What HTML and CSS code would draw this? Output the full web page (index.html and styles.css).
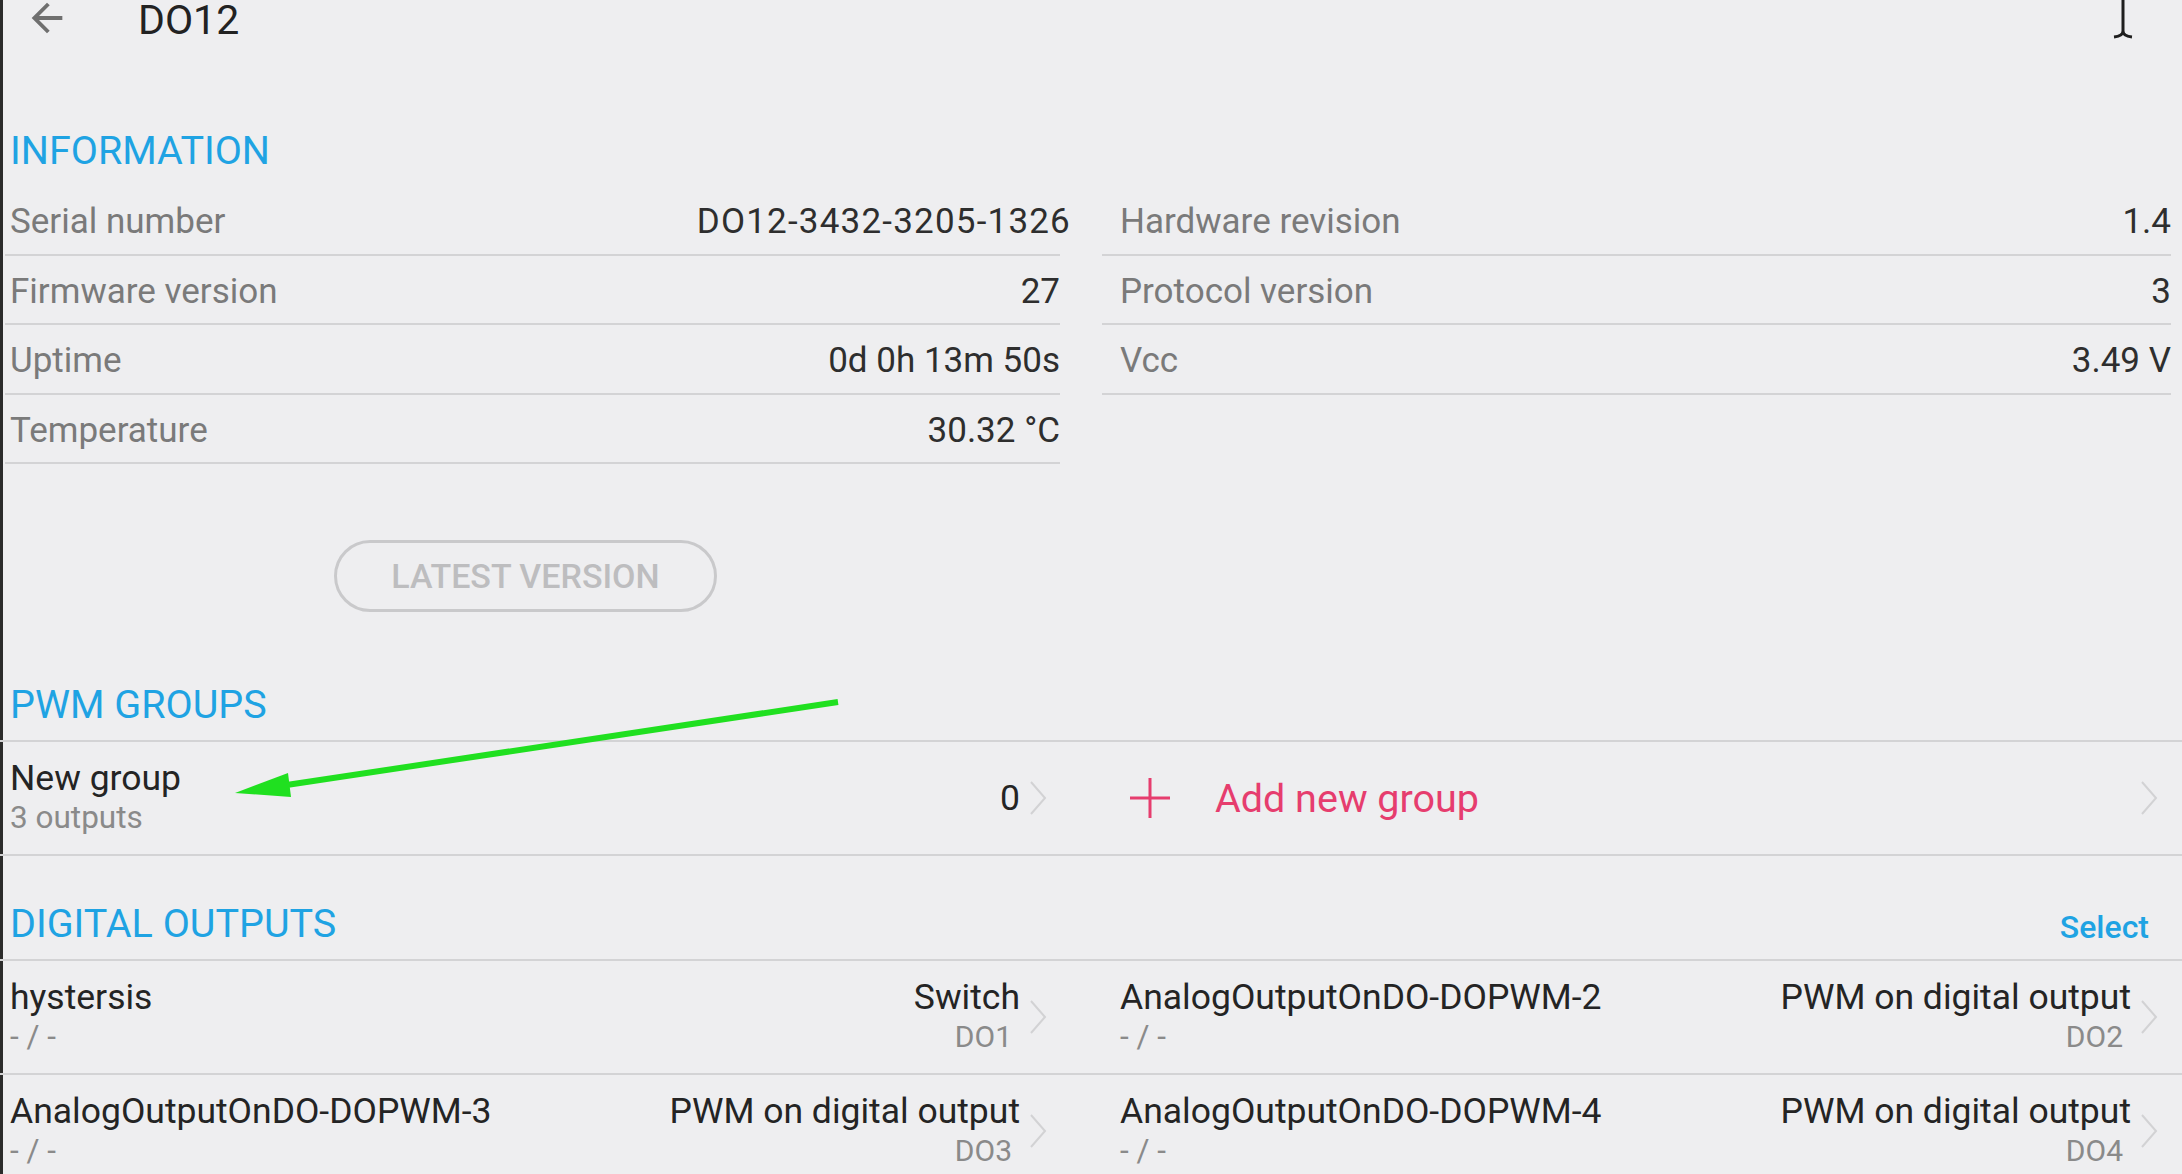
FILE: index.html
```html
<!DOCTYPE html>
<html lang="en">
<head>
    <meta charset="UTF-8">
    <title>DO12</title>
    <link rel="stylesheet" href="styles.css">
</head>
<body>
    <!-- Top bar -->
    <div class="topbar">
        <svg class="back-icon" viewBox="0 0 24 24"><path d="M20 11H7.83l5.59-5.59L12 4l-8 8 8 8 1.41-1.41L7.83 13H20v-2z"/></svg>
        <div class="title">DO12</div>
    </div>

    <!-- Information -->
    <div class="section-head">INFORMATION</div>
    <div class="info-grid">
        <div class="info-col">
            <div class="info-row"><span class="label">Serial number</span><span class="value value-wide">DO12-3432-3205-1326</span></div>
            <div class="info-row"><span class="label">Firmware version</span><span class="value">27</span></div>
            <div class="info-row"><span class="label">Uptime</span><span class="value">0d 0h 13m 50s</span></div>
            <div class="info-row"><span class="label">Temperature</span><span class="value">30.32 °C</span></div>
        </div>
        <div class="info-col right">
            <div class="info-row"><span class="label">Hardware revision</span><span class="value">1.4</span></div>
            <div class="info-row"><span class="label">Protocol version</span><span class="value">3</span></div>
            <div class="info-row"><span class="label">Vcc</span><span class="value">3.49 V</span></div>
        </div>
    </div>

    <div class="actions">
        <button class="outline-btn">LATEST VERSION</button>
    </div>

    <!-- PWM groups -->
    <div class="section-head head-pwm">PWM GROUPS</div>
    <div class="list">
        <div class="list-row">
            <div class="cell">
                <div class="main">
                    <div class="item-title">New group</div>
                    <div class="item-sub">3 outputs</div>
                </div>
                <div class="side"><div class="item-title">0</div></div>
                <svg class="chevron" viewBox="0 0 20 36"><polyline points="3,2 17,18 3,34"/></svg>
            </div>
            <div class="cell cell-right">
                <svg class="plus" viewBox="0 0 46 46"><path d="M23 3V43M3 23H43"/></svg>
                <div class="add-text">Add new group</div>
                <svg class="chevron" viewBox="0 0 20 36"><polyline points="3,2 17,18 3,34"/></svg>
            </div>
        </div>
    </div>

    <!-- Digital outputs -->
    <div class="section-head head-do">DIGITAL OUTPUTS<span class="select">Select</span></div>
    <div class="list">
        <div class="list-row">
            <div class="cell">
                <div class="main">
                    <div class="item-title">hystersis</div>
                    <div class="item-sub">- / -</div>
                </div>
                <div class="side">
                    <div class="item-title">Switch</div>
                    <div class="item-sub">DO1</div>
                </div>
                <svg class="chevron" viewBox="0 0 20 36"><polyline points="3,2 17,18 3,34"/></svg>
            </div>
            <div class="cell cell-right">
                <div class="main">
                    <div class="item-title">AnalogOutputOnDO-DOPWM-2</div>
                    <div class="item-sub">- / -</div>
                </div>
                <div class="side">
                    <div class="item-title">PWM on digital output</div>
                    <div class="item-sub">DO2</div>
                </div>
                <svg class="chevron" viewBox="0 0 20 36"><polyline points="3,2 17,18 3,34"/></svg>
            </div>
        </div>
        <div class="list-row">
            <div class="cell">
                <div class="main">
                    <div class="item-title">AnalogOutputOnDO-DOPWM-3</div>
                    <div class="item-sub">- / -</div>
                </div>
                <div class="side">
                    <div class="item-title">PWM on digital output</div>
                    <div class="item-sub">DO3</div>
                </div>
                <svg class="chevron" viewBox="0 0 20 36"><polyline points="3,2 17,18 3,34"/></svg>
            </div>
            <div class="cell cell-right">
                <div class="main">
                    <div class="item-title">AnalogOutputOnDO-DOPWM-4</div>
                    <div class="item-sub">- / -</div>
                </div>
                <div class="side">
                    <div class="item-title">PWM on digital output</div>
                    <div class="item-sub">DO4</div>
                </div>
                <svg class="chevron" viewBox="0 0 20 36"><polyline points="3,2 17,18 3,34"/></svg>
            </div>
        </div>
    </div>

    <!-- Mouse cursor and green annotation arrow drawn over the screen -->
    <svg class="cursor" viewBox="0 0 30 40"><path d="M15 0V31M15 31Q15 36 6 37M15 31Q15 36 24 37"/></svg>
    <svg class="annotation" viewBox="0 0 2182 1174">
        <line x1="838" y1="702" x2="280" y2="786"/>
        <polygon points="235,793 288,773 291,797"/>
    </svg>
</body>
</html>
```

FILE: styles.css
```css
/* Page */
html {
    background-color: #eeeef0;
}

body {
    margin: 0;
    height: 1174px;
    overflow: hidden;
    position: relative;
    font-family: Roboto, "Noto Sans", sans-serif;
    background-color: #eeeef0;
    box-shadow: inset 3px 0 0 #2b2b2b;
    color: #2e2e2e;
}

/* Top bar */
.topbar {
    height: 40px;
    display: flex;
    align-items: center;
    padding-left: 24px;
}

.back-icon {
    width: 46px;
    height: 46px;
    margin-top: -4px;
    fill: #6f6f6f;
}

.title {
    margin-left: 68px;
    font-size: 41px;
    line-height: 40px;
    color: #222;
}

/* Section headers */
.section-head {
    height: 71px;
    display: flex;
    align-items: center;
    justify-content: space-between;
    padding: 0 33px 0 10px;
    margin-top: 75px;
    font-size: 39.5px;
    color: #1fa3e3;
}

.head-pwm {
    margin-top: 57px;
}

.head-do {
    margin-top: 32px;
}

.select {
    font-size: 32px;
    font-weight: 500;
    padding-top: 6px;
}

/* Information grid */
.info-grid {
    display: grid;
    grid-template-columns: 1055px 1069px;
    column-gap: 42px;
    padding: 0 11px 0 5px;
}

.info-row {
    box-sizing: border-box;
    height: 69.5px;
    display: flex;
    align-items: center;
    justify-content: space-between;
    padding: 4px 0 0 5px;
    border-bottom: 2px solid #d3d3d5;
    font-size: 35px;
}

.right .info-row {
    padding-left: 18px;
}

.label {
    color: #7a7a7a;
}

.value {
    color: #2e2e2e;
}

.value-wide {
    margin-right: -11px;
    letter-spacing: 1.2px;
}

/* Button */
.actions {
    padding-left: 334px;
    margin-top: 76px;
}

.outline-btn {
    width: 383px;
    height: 72px;
    border: 3px solid #c9c9cb;
    border-radius: 36px;
    background: transparent;
    font-family: Roboto, sans-serif;
    font-size: 34px;
    font-weight: 500;
    color: #bdbdbf;
    padding: 0;
}

/* Lists */
.list {
    border-top: 2px solid #d3d3d5;
}

.list-row {
    box-sizing: border-box;
    height: 114px;
    display: grid;
    grid-template-columns: 1055px 1069px;
    column-gap: 42px;
    padding: 0 11px 0 5px;
    border-bottom: 2px solid #d3d3d5;
}

.cell {
    display: flex;
    align-items: center;
    padding: 0 12px 0 5px;
}

.cell-right {
    padding-left: 18px;
}

.main {
    flex: 1;
    min-width: 0;
}

.side {
    text-align: right;
}

.item-title {
    font-size: 35.5px;
    line-height: 40px;
    color: #242424;
    white-space: nowrap;
}

.item-sub {
    font-size: 31.5px;
    line-height: 40px;
    color: #8a8a8a;
    white-space: pre;
}

.side .item-sub {
    padding-right: 8px;
    font-size: 30px;
}

.chevron {
    width: 20px;
    height: 36px;
    margin-left: 8px;
    fill: none;
    stroke: #d2d2d4;
    stroke-width: 2;
}

.plus {
    width: 46px;
    height: 46px;
    margin-left: 7px;
    fill: none;
    stroke: #e63d6e;
    stroke-width: 3;
}

.add-text {
    flex: 1;
    margin-left: 42px;
    font-size: 39.5px;
    color: #e63d6e;
}

/* Overlays */
.cursor {
    position: absolute;
    left: 2108px;
    top: 0;
    width: 30px;
    height: 40px;
    fill: none;
    stroke: #1e1e1e;
    stroke-width: 3;
}

.annotation {
    position: absolute;
    left: 0;
    top: 0;
    width: 2182px;
    height: 1174px;
    pointer-events: none;
}

.annotation line {
    stroke: #20e020;
    stroke-width: 6;
}

.annotation polygon {
    fill: #20e020;
}
```
